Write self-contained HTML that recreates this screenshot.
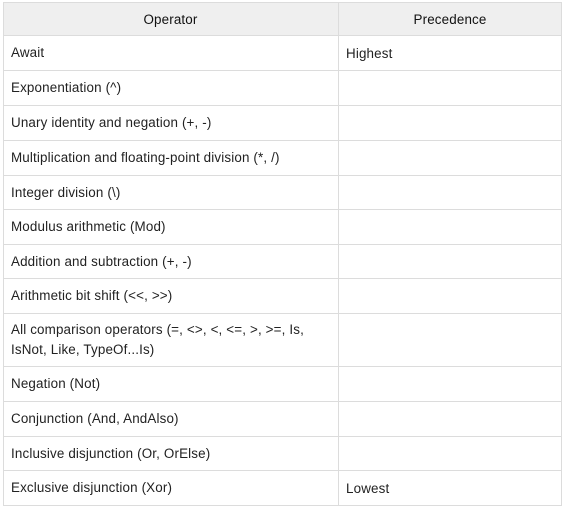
<html><head><style>
body{margin:0;width:567px;height:513px;background:#fff;font-family:"Liberation Sans",sans-serif;font-size:13.4px;letter-spacing:0.15px;color:#222;position:relative;overflow:hidden}
.r{position:absolute;left:3px;width:559px;border-top:1px solid #dcdcdc;box-sizing:border-box}
.c1,.c2{position:absolute;top:0;bottom:0;display:flex;align-items:center}
.c1{left:8px;width:318px;line-height:20px}
.c2{left:343px}
.h{background:#efefef}
.h .c1,.h .c2{justify-content:center;font-weight:normal;color:#111}
.h .c1{left:0;width:335px}.h .c2{left:335px;width:224px}
#v{position:absolute;left:338px;top:2px;width:1px;height:504px;background:#dcdcdc}
#o{position:absolute;left:3px;top:2px;width:559px;height:504px;border:1px solid #dcdcdc;box-sizing:border-box}
</style></head><body>
<div class="r h" style="top:2px;height:34px"><div class="c1">Operator</div><div class="c2">Precedence</div></div>
<div class="r" style="top:35px;height:35px"><div class="c1">Await</div><div class="c2">Highest</div></div>
<div class="r" style="top:70px;height:35px"><div class="c1">Exponentiation (^)</div></div>
<div class="r" style="top:105px;height:35px"><div class="c1">Unary identity and negation (+, -)</div></div>
<div class="r" style="top:140px;height:35px"><div class="c1">Multiplication and floating-point division (*, /)</div></div>
<div class="r" style="top:175px;height:34px"><div class="c1">Integer division (\)</div></div>
<div class="r" style="top:209px;height:35px"><div class="c1">Modulus arithmetic (Mod)</div></div>
<div class="r" style="top:244px;height:34px"><div class="c1">Addition and subtraction (+, -)</div></div>
<div class="r" style="top:278px;height:35px"><div class="c1">Arithmetic bit shift (&lt;&lt;, &gt;&gt;)</div></div>
<div class="r" style="top:313px;height:53px"><div class="c1">All comparison operators (=, &lt;&gt;, &lt;, &lt;=, &gt;, &gt;=, Is,<br>IsNot, Like, TypeOf...Is)</div></div>
<div class="r" style="top:366px;height:35px"><div class="c1">Negation (Not)</div></div>
<div class="r" style="top:401px;height:35px"><div class="c1">Conjunction (And, AndAlso)</div></div>
<div class="r" style="top:436px;height:34px"><div class="c1">Inclusive disjunction (Or, OrElse)</div></div>
<div class="r" style="top:470px;height:35px"><div class="c1">Exclusive disjunction (Xor)</div><div class="c2">Lowest</div></div>
<div id="v"></div><div id="o"></div>
</body></html>
